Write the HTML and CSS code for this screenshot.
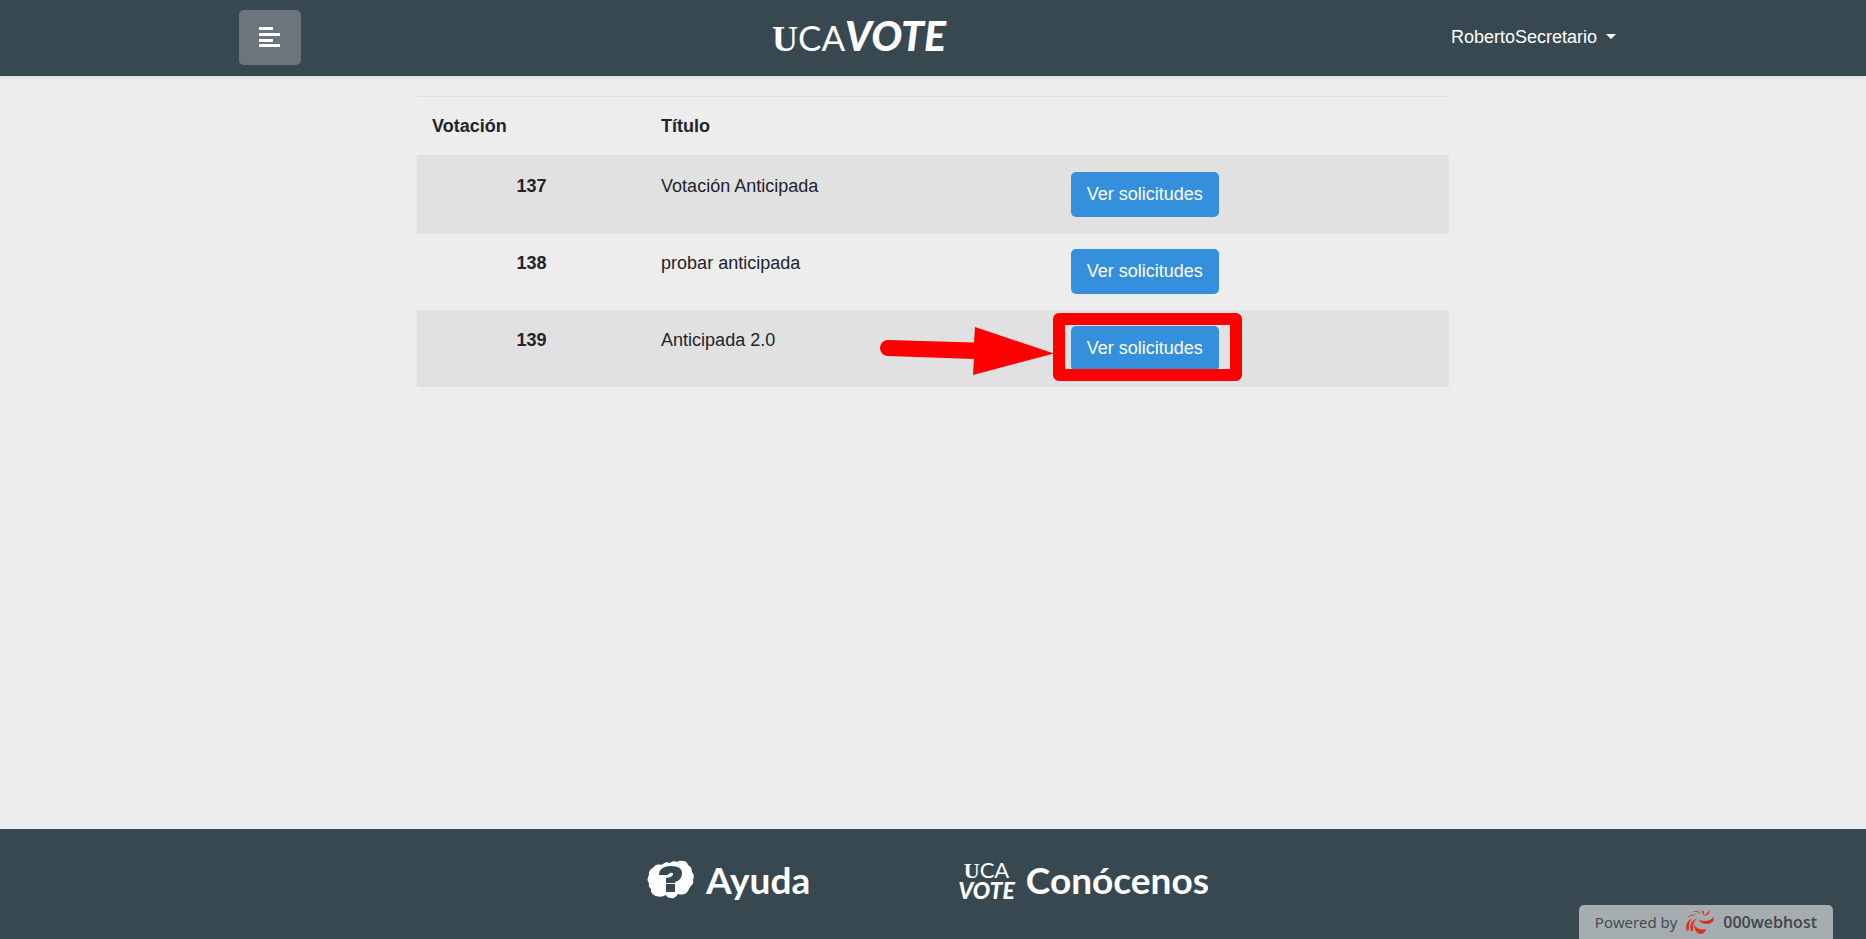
FILE: index.html
```html
<!DOCTYPE html>
<html lang="es">
<head>
<meta charset="utf-8">
<title>UCAVOTE</title>
<link rel="stylesheet" href="styles.css">
</head>
<body>
<header class="topbar">
  <div class="topbar-inner">
    <div class="topbar-side">
      <button class="menu-btn" type="button" aria-label="Menú">
        <svg width="22" height="22" viewBox="0 0 22 22" fill="#fff" aria-hidden="true">
          <rect x="0" y="0" width="14" height="3"/><rect x="0" y="6" width="21" height="3"/><rect x="0" y="12" width="14" height="3"/><rect x="0" y="17" width="21" height="3"/>
        </svg>
      </button>
    </div>
    <a class="brand" href="#"><span class="brand-u">U</span><span class="brand-ca">CA</span><span class="brand-vote">VOTE</span></a>
    <div class="topbar-side topbar-end">
      <button class="user-btn" type="button">RobertoSecretario <span class="caret"></span></button>
    </div>
  </div>
</header>
<main class="content">
  <table class="votes">
    <thead>
      <tr><th class="col-id" scope="col">Votación</th><th class="col-title" scope="col">Título</th><th class="col-action" scope="col"></th></tr>
    </thead>
    <tbody>
      <tr><th scope="row">137</th><td>Votación Anticipada</td><td><button class="btn" type="button">Ver solicitudes</button></td></tr>
      <tr><th scope="row">138</th><td>probar anticipada</td><td><button class="btn" type="button">Ver solicitudes</button></td></tr>
      <tr><th scope="row">139</th><td>Anticipada 2.0</td><td><div class="marked"><button class="btn" type="button">Ver solicitudes</button><span class="mark-box"></span>
        <svg class="mark-arrow" width="175" height="50" viewBox="0 0 175 50" fill="#f00" aria-hidden="true"><path d="M9 14L95 16.500L96 1L175 27.500L94 49L95 33L9 30A8 8 0 0 1 9 14Z"/></svg></div></td></tr>
    </tbody>
  </table>
</main>
<footer class="footer">
  <nav class="footer-links">
    <a class="footer-link" href="#">
      <svg width="48" height="40" viewBox="0 0 48 40" aria-hidden="true">
        <path fill="#fff" d="M7 7Q8 4 12 4.500Q15 5 16 4Q19 1 23 3Q26 0 30 2Q32 0 36 1Q40 1 41 5Q45 7 45 12Q48 15 46 20Q47 24 44 26Q42 28 41 31Q38 36 31 34Q28 39 24 38Q20 38 19 35Q14 38 9 36Q3 34 4 29Q1 27 2 23Q-1 20 2 15Q1 10 7 7Z"/>
        <path fill="#384850" d="M12 14Q13 6 24 6Q35 6 35 13Q35 20 28 22V23H19V18Q26 17 26 14Q26 12 23 13L20 15H12ZM19 24H28V32H19Z"/>
      </svg>
      <span>Ayuda</span>
    </a>
    <a class="footer-link footer-about" href="#">
      <span class="mini-logo"><span class="mini-top"><span class="brand-serif">U</span>CA</span><span class="mini-vote">VOTE</span></span>
      <span>Conócenos</span>
    </a>
  </nav>
  <a class="powered" href="#">
    <span>Powered by</span>
    <svg width="30" height="26" viewBox="0 0 30 26" aria-hidden="true" fill="#d9301f">
      <path d="M2 22Q-1 14 7 9Q3 15 4 21ZM2 9Q6 4 12 6Q6 6 2 9ZM7 3Q13 0 16 5Q12 2 7 3ZM16 1Q21 2 18 6Q18 3 16 1ZM25 1Q25 6 18 7Q23 4 25 1Z"/>
      <path d="M6 22Q3 13 12 9Q7 14 8 22ZM29 8Q29 15 22 15Q16 15 14 11Q23 14 29 8ZM9 15Q12 22 21 20Q20 25 15 25Q9 23 9 15Z"/>
    </svg>
    <span class="host">000webhost</span>
  </a>
</footer>
</body>
</html>
```
FILE: styles.css
```css
* { box-sizing: border-box; }
body {
  margin: 0;
  min-height: 100vh;
  display: flex;
  flex-direction: column;
  background: #ededed;
  color: #212529;
  font: 18px/29px "Liberation Sans", Arial, sans-serif;
}
button { font: inherit; border: 0; cursor: pointer; }
a { color: #fff; text-decoration: none; }
.topbar {
  background: #384850;
  box-shadow: 0 2px 5px rgba(0, 0, 0, 0.08);
}
.topbar-inner {
  width: 75%;
  max-width: 1388px;
  margin: 0 auto;
  padding: 10px 0 11px;
  display: flex;
  align-items: center;
}
.topbar-side { flex: 1; }
.topbar-end { text-align: right; }
.menu-btn {
  width: 62px;
  height: 55px;
  padding: 0;
  display: flex;
  align-items: center;
  justify-content: center;
  border-radius: 5px;
  background: #6c757d;
}
.brand { display: flex; align-items: baseline; margin-right: 148px; }
.brand-u, .brand-serif { font-family: "Liberation Serif", serif; font-weight: 700; }
.brand-u { font-size: 36px; line-height: 36px; }
.brand-ca { font: 35px/36px Lato, sans-serif; }
.brand-vote { font: italic 900 41px/36px Lato, sans-serif; }
.user-btn { padding: 0 11px 1px; background: none; color: #fff; }
.caret {
  display: inline-block;
  margin-left: 4px;
  vertical-align: 4px;
  border: 5px solid transparent;
  border-top-color: #fff;
  border-bottom: 0;
}
.content { flex: 1; padding: 20px; }
.votes {
  width: 100%;
  max-width: 1032px;
  margin: 0 auto;
  border-collapse: collapse;
  table-layout: fixed;
}
.votes th, .votes td { padding: 15px 15px 16px; vertical-align: top; border-top: 1px solid #dee2e6; }
.votes thead th { padding-bottom: 14px; text-align: left; border-bottom: 2px solid #dee2e6; }
.col-id { width: 22.2%; }
.col-title { width: 39.7%; }
.votes tbody tr:nth-child(odd) { background: #e1e1e1; }
.btn {
  display: block;
  padding: 8px 16px;
  border-radius: 5px;
  background: #3490dc;
  color: #fff;
}
.marked { position: relative; width: max-content; }
.mark-box {
  position: absolute;
  inset: -13px -23px -10px -18px;
  border: 12px solid #f00;
  border-radius: 6px;
}
.mark-arrow { position: absolute; right: 100%; top: 0; margin-right: 17px; }
.footer { position: relative; background: #384850; }
.footer-links { display: flex; justify-content: center; padding: 29px 10px 37px 0; }
.footer-link {
  display: flex;
  align-items: center;
  gap: 11px;
  font: 700 37px/44px Lato, sans-serif;
}
.footer-about { margin-left: 148px; }
.mini-logo { display: flex; flex-direction: column; align-items: center; }
.mini-top { font: 22px/18px Lato, sans-serif; }
.mini-vote { font: italic 900 23px/20px Lato, sans-serif; }
.powered {
  position: absolute;
  right: 33px;
  bottom: 0;
  display: flex;
  align-items: center;
  gap: 8px;
  height: 34px;
  padding: 0 16px;
  border-radius: 5px 5px 0 0;
  background: #a5adb0;
  color: #404649;
  font: 15px/34px "Open Sans", sans-serif;
}
.host { font-size: 16px; font-weight: 600; }
```
